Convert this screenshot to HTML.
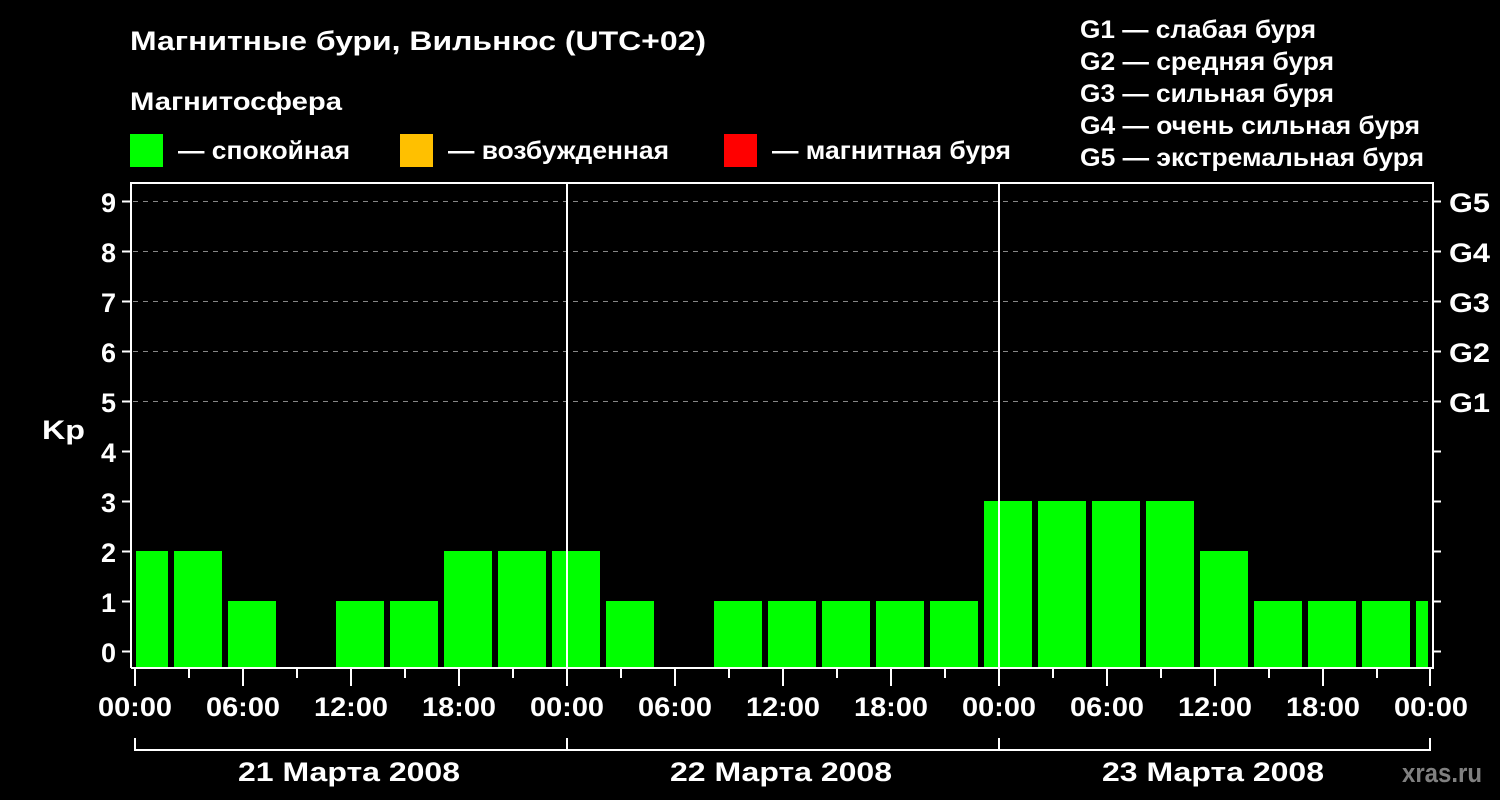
<!DOCTYPE html>
<html><head><meta charset="utf-8"><style>
html,body{margin:0;padding:0;background:#000;}
svg{display:block;}
text{font-family:"Liberation Sans",sans-serif;font-weight:bold;fill:#fff;}
</style></head><body>
<svg width="1500" height="800" viewBox="0 0 1500 800" xmlns="http://www.w3.org/2000/svg">
<rect width="1500" height="800" fill="#000"/>
<text x="130" y="50" font-size="27" textLength="576" lengthAdjust="spacingAndGlyphs">Магнитные бури, Вильнюс (UTC+02)</text>
<text x="130" y="110" font-size="25" textLength="212" lengthAdjust="spacingAndGlyphs">Магнитосфера</text>
<rect x="130" y="134" width="33" height="33" fill="#00ff00"/>
<text x="178" y="159" font-size="25" textLength="172" lengthAdjust="spacingAndGlyphs">— спокойная</text>
<rect x="400" y="134" width="33" height="33" fill="#ffc000"/>
<text x="448" y="159" font-size="25" textLength="221" lengthAdjust="spacingAndGlyphs">— возбужденная</text>
<rect x="724" y="134" width="33" height="33" fill="#ff0000"/>
<text x="772" y="159" font-size="25" textLength="239" lengthAdjust="spacingAndGlyphs">— магнитная буря</text>
<g font-size="25">
<text x="1080" y="38" textLength="236" lengthAdjust="spacingAndGlyphs">G1 — слабая буря</text>
<text x="1080" y="70" textLength="254" lengthAdjust="spacingAndGlyphs">G2 — средняя буря</text>
<text x="1080" y="102" textLength="254" lengthAdjust="spacingAndGlyphs">G3 — сильная буря</text>
<text x="1080" y="134" textLength="340" lengthAdjust="spacingAndGlyphs">G4 — очень сильная буря</text>
<text x="1080" y="166" textLength="344" lengthAdjust="spacingAndGlyphs">G5 — экстремальная буря</text>
</g>
<g stroke="#888" stroke-width="1" stroke-dasharray="5,5">
<line x1="133" y1="201.5" x2="1432" y2="201.5"/>
<line x1="133" y1="251.5" x2="1432" y2="251.5"/>
<line x1="133" y1="301.5" x2="1432" y2="301.5"/>
<line x1="133" y1="351.5" x2="1432" y2="351.5"/>
<line x1="133" y1="401.5" x2="1432" y2="401.5"/>
</g>
<g fill="#00ff00">
<rect x="136" y="551" width="32" height="117"/>
<rect x="174" y="551" width="48" height="117"/>
<rect x="228" y="601" width="48" height="67"/>
<rect x="336" y="601" width="48" height="67"/>
<rect x="390" y="601" width="48" height="67"/>
<rect x="444" y="551" width="48" height="117"/>
<rect x="498" y="551" width="48" height="117"/>
<rect x="552" y="551" width="48" height="117"/>
<rect x="606" y="601" width="48" height="67"/>
<rect x="714" y="601" width="48" height="67"/>
<rect x="768" y="601" width="48" height="67"/>
<rect x="822" y="601" width="48" height="67"/>
<rect x="876" y="601" width="48" height="67"/>
<rect x="930" y="601" width="48" height="67"/>
<rect x="984" y="501" width="48" height="167"/>
<rect x="1038" y="501" width="48" height="167"/>
<rect x="1092" y="501" width="48" height="167"/>
<rect x="1146" y="501" width="48" height="167"/>
<rect x="1200" y="551" width="48" height="117"/>
<rect x="1254" y="601" width="48" height="67"/>
<rect x="1308" y="601" width="48" height="67"/>
<rect x="1362" y="601" width="48" height="67"/>
<rect x="1416" y="601" width="12" height="67"/>
</g>
<g stroke="#fff" stroke-width="2" fill="none">
<polyline points="131,668 131,183 1433,183 1433,668 131,668"/>
<line x1="567" y1="183" x2="567" y2="668"/>
<line x1="999" y1="183" x2="999" y2="668"/>
</g>
<g stroke="#fff" stroke-width="2">
<line x1="122" y1="201.5" x2="131" y2="201.5"/><line x1="1433" y1="201.5" x2="1441" y2="201.5"/>
<line x1="122" y1="251.5" x2="131" y2="251.5"/><line x1="1433" y1="251.5" x2="1441" y2="251.5"/>
<line x1="122" y1="301.5" x2="131" y2="301.5"/><line x1="1433" y1="301.5" x2="1441" y2="301.5"/>
<line x1="122" y1="351.5" x2="131" y2="351.5"/><line x1="1433" y1="351.5" x2="1441" y2="351.5"/>
<line x1="122" y1="401.5" x2="131" y2="401.5"/><line x1="1433" y1="401.5" x2="1441" y2="401.5"/>
<line x1="122" y1="451.5" x2="131" y2="451.5"/><line x1="1433" y1="451.5" x2="1441" y2="451.5"/>
<line x1="122" y1="501.5" x2="131" y2="501.5"/><line x1="1433" y1="501.5" x2="1441" y2="501.5"/>
<line x1="122" y1="551.5" x2="131" y2="551.5"/><line x1="1433" y1="551.5" x2="1441" y2="551.5"/>
<line x1="122" y1="601.5" x2="131" y2="601.5"/><line x1="1433" y1="601.5" x2="1441" y2="601.5"/>
<line x1="122" y1="651.5" x2="131" y2="651.5"/><line x1="1433" y1="651.5" x2="1441" y2="651.5"/>
</g>
<g font-size="27" text-anchor="end">
<text x="116" y="212">9</text><text x="116" y="262">8</text><text x="116" y="312">7</text>
<text x="116" y="362">6</text><text x="116" y="412">5</text><text x="116" y="462">4</text>
<text x="116" y="512">3</text><text x="116" y="562">2</text><text x="116" y="612">1</text>
<text x="116" y="662">0</text>
</g>
<text x="42" y="439" font-size="27" textLength="43" lengthAdjust="spacingAndGlyphs">Kp</text>
<g font-size="27">
<text x="1449" y="212" textLength="41" lengthAdjust="spacingAndGlyphs">G5</text><text x="1449" y="262" textLength="41" lengthAdjust="spacingAndGlyphs">G4</text><text x="1449" y="312" textLength="41" lengthAdjust="spacingAndGlyphs">G3</text>
<text x="1449" y="362" textLength="41" lengthAdjust="spacingAndGlyphs">G2</text><text x="1449" y="412" textLength="41" lengthAdjust="spacingAndGlyphs">G1</text>
</g>
<g stroke="#fff" stroke-width="2">
<line x1="135" y1="668" x2="135" y2="686"/><line x1="189" y1="668" x2="189" y2="678"/>
<line x1="243" y1="668" x2="243" y2="686"/><line x1="297" y1="668" x2="297" y2="678"/>
<line x1="351" y1="668" x2="351" y2="686"/><line x1="405" y1="668" x2="405" y2="678"/>
<line x1="459" y1="668" x2="459" y2="686"/><line x1="513" y1="668" x2="513" y2="678"/>
<line x1="567" y1="668" x2="567" y2="686"/><line x1="621" y1="668" x2="621" y2="678"/>
<line x1="675" y1="668" x2="675" y2="686"/><line x1="729" y1="668" x2="729" y2="678"/>
<line x1="783" y1="668" x2="783" y2="686"/><line x1="837" y1="668" x2="837" y2="678"/>
<line x1="891" y1="668" x2="891" y2="686"/><line x1="945" y1="668" x2="945" y2="678"/>
<line x1="999" y1="668" x2="999" y2="686"/><line x1="1053" y1="668" x2="1053" y2="678"/>
<line x1="1107" y1="668" x2="1107" y2="686"/><line x1="1161" y1="668" x2="1161" y2="678"/>
<line x1="1215" y1="668" x2="1215" y2="686"/><line x1="1269" y1="668" x2="1269" y2="678"/>
<line x1="1323" y1="668" x2="1323" y2="686"/><line x1="1377" y1="668" x2="1377" y2="678"/>
<line x1="1430" y1="668" x2="1430" y2="686"/>
<polyline fill="none" points="135,738 135,750 1430,750 1430,738"/>
<line x1="567" y1="738" x2="567" y2="750"/>
<line x1="999" y1="738" x2="999" y2="750"/>
</g>
<g font-size="27">
<text x="98" y="716" textLength="74" lengthAdjust="spacingAndGlyphs">00:00</text>
<text x="206" y="716" textLength="74" lengthAdjust="spacingAndGlyphs">06:00</text>
<text x="314" y="716" textLength="74" lengthAdjust="spacingAndGlyphs">12:00</text>
<text x="422" y="716" textLength="74" lengthAdjust="spacingAndGlyphs">18:00</text>
<text x="530" y="716" textLength="74" lengthAdjust="spacingAndGlyphs">00:00</text>
<text x="638" y="716" textLength="74" lengthAdjust="spacingAndGlyphs">06:00</text>
<text x="746" y="716" textLength="74" lengthAdjust="spacingAndGlyphs">12:00</text>
<text x="854" y="716" textLength="74" lengthAdjust="spacingAndGlyphs">18:00</text>
<text x="962" y="716" textLength="74" lengthAdjust="spacingAndGlyphs">00:00</text>
<text x="1070" y="716" textLength="74" lengthAdjust="spacingAndGlyphs">06:00</text>
<text x="1178" y="716" textLength="74" lengthAdjust="spacingAndGlyphs">12:00</text>
<text x="1286" y="716" textLength="74" lengthAdjust="spacingAndGlyphs">18:00</text>
<text x="1394" y="716" textLength="74" lengthAdjust="spacingAndGlyphs">00:00</text>
<text x="238" y="781" textLength="222" lengthAdjust="spacingAndGlyphs">21 Марта 2008</text>
<text x="670" y="781" textLength="222" lengthAdjust="spacingAndGlyphs">22 Марта 2008</text>
<text x="1102" y="781" textLength="222" lengthAdjust="spacingAndGlyphs">23 Марта 2008</text>
</g>
<text x="1402" y="782" font-size="27" textLength="80" lengthAdjust="spacingAndGlyphs" style="fill:#808080">xras.ru</text>
</svg>
</body></html>
